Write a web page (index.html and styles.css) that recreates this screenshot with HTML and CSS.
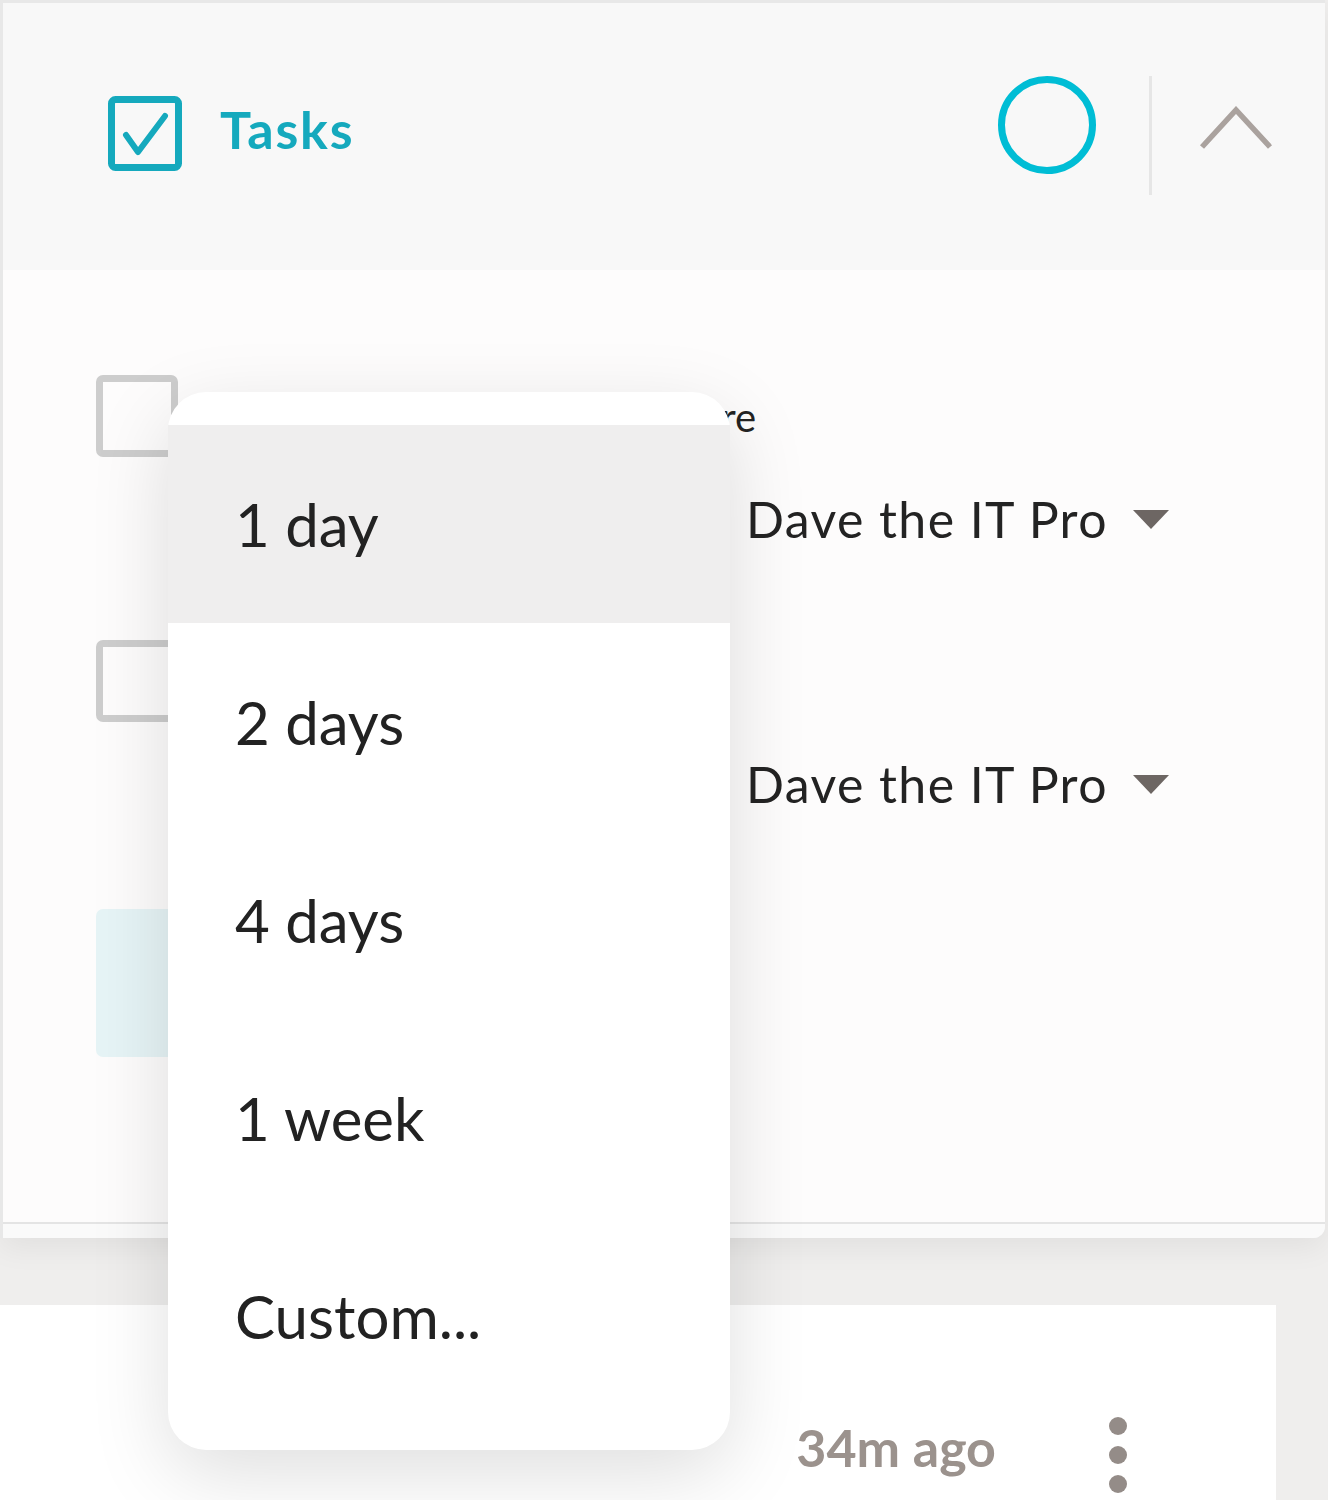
FILE: index.html
```html
<!DOCTYPE html>
<html lang="en">
<head>
    <meta charset="UTF-8">
    <meta name="viewport" content="width=device-width, initial-scale=1.0">
    <title>Tasks</title>
    <link rel="stylesheet" href="styles.css">
</head>
<body>
    <div class="page">
        <section class="panel">
            <header class="panel-header">
                <svg class="tasks-icon" width="74" height="75" viewBox="0 0 74 75">
                    <rect x="3.5" y="3.5" width="67" height="68" rx="4" fill="none" stroke="#15a9bd" stroke-width="7"/>
                    <polyline points="18,39 30,56 57,20" fill="none" stroke="#15a9bd" stroke-width="6" stroke-linecap="round" stroke-linejoin="round"/>
                </svg>
                <h1 class="panel-title">Tasks</h1>
                <div class="spacer"></div>
                <svg class="progress" width="100" height="100" viewBox="0 0 100 100">
                    <circle cx="50" cy="50" r="45.5" fill="none" stroke="#00bdd5" stroke-width="7"/>
                </svg>
                <div class="divider"></div>
                <svg class="collapse" width="74" height="45" viewBox="0 0 74 45">
                    <polyline points="3,41 37,4 71,41" fill="none" stroke="#aaa29e" stroke-width="5.5"/>
                </svg>
            </header>

            <div class="panel-body">
                <div class="task">
                    <div class="check"></div>
                    <div class="task-main">
                        <div class="task-title">Renew the antivirus software</div>
                        <div class="task-meta">
                            <span class="due"></span>
                            <span class="assignee">Dave the IT Pro <i class="caret"></i></span>
                        </div>
                    </div>
                </div>
                <div class="task">
                    <div class="check"></div>
                    <div class="task-main">
                        <div class="task-title"></div>
                        <div class="task-meta">
                            <span class="due"></span>
                            <span class="assignee">Dave the IT Pro <i class="caret"></i></span>
                        </div>
                    </div>
                </div>
                <div class="add-task"></div>
            </div>
            <div class="panel-foot"></div>
        </section>

        <section class="feed-card">
            <span class="time">34m ago</span>
            <span class="kebab"><i></i><i></i><i></i></span>
        </section>

        <ul class="menu">
            <li class="menu-item active">1 day</li>
            <li class="menu-item">2 days</li>
            <li class="menu-item">4 days</li>
            <li class="menu-item">1 week</li>
            <li class="menu-item">Custom...</li>
        </ul>
    </div>
</body>
</html>
```

FILE: styles.css
```css
html, body {
    margin: 0;
    padding: 0;
    background-color: #efeeed;
}
body {
    font-family: Lato, "Open Sans", sans-serif;
    color: #232323;
    height: 1500px;
    overflow: hidden;
}
.page {
    position: relative;
    width: 1328px;
}

/* tasks panel */
.panel {
    width: 1322px;
    border-top: 3px solid #e8e8e8;
    border-left: 3px solid #e8e8e8;
    border-bottom-right-radius: 12px;
    background-color: #fafafa;
    box-shadow: 0 10px 30px rgba(0,0,0,0.06);
    overflow: hidden;
}
.panel-header {
    display: flex;
    align-items: flex-start;
    height: 267px;
    padding: 0 52px 0 105px;
    background-color: #f8f8f8;
}
.tasks-icon {
    margin-top: 93px;
}
.panel-title {
    margin: 100px 0 0 38px;
    font-size: 52px;
    line-height: 1;
    font-weight: 700;
    letter-spacing: 1.8px;
    color: #15a9bd;
}
.spacer {
    flex: 1;
}
.progress {
    margin-top: 72px;
}
.divider {
    width: 3px;
    height: 119px;
    margin: 73px 0 0 52px;
    background-color: #e6e6e6;
}
.collapse {
    margin: 103px 0 0 47px;
}

.panel-body {
    box-sizing: border-box;
    height: 954px;
    padding: 105px 0 0 93px;
    background-color: #fdfcfc;
    border-bottom: 2px solid #e4e4e4;
}
.task {
    display: flex;
    align-items: flex-start;
    height: 265px;
}
.task + .task {
    height: 269px;
}
.check {
    box-sizing: border-box;
    width: 82px;
    height: 82px;
    border: 7px solid #cdcdcd;
    border-radius: 7px;
}
.task-main {
    margin-left: 67px;
}
.task-title {
    height: 40px;
    margin-top: 22px;
    font-size: 40px;
    line-height: 1;
    white-space: nowrap;
}
.task-meta {
    display: flex;
    align-items: center;
    margin-top: 57px;
    font-size: 50px;
    line-height: 1;
}
.due {
    width: 461px;
    height: 50px;
    margin-right: 40px;
}
.assignee {
    display: flex;
    align-items: center;
    white-space: nowrap;
    letter-spacing: 1.4px;
}
.caret {
    width: 0;
    height: 0;
    margin-left: 25px;
    border-left: 18px solid transparent;
    border-right: 18px solid transparent;
    border-top: 19px solid #6d6663;
}
.add-task {
    width: 560px;
    height: 148px;
    border-radius: 7px;
    background-color: #e6f4f6;
}
.panel-foot {
    height: 14px;
    background-color: #fafafa;
}

/* activity card below */
.feed-card {
    display: flex;
    align-items: flex-start;
    justify-content: flex-end;
    box-sizing: border-box;
    width: 1276px;
    height: 200px;
    margin-top: 67px;
    padding: 112px 149px 0 0;
    background-color: #fff;
}
.time {
    font-size: 52px;
    line-height: 1;
    font-weight: 700;
    color: #9b928d;
    margin-top: 4px;
}
.kebab {
    display: flex;
    flex-direction: column;
    gap: 11px;
    margin-left: 113px;
    margin-top: 0;
}
.kebab i {
    display: block;
    width: 18px;
    height: 18px;
    border-radius: 50%;
    background-color: #948c88;
}

/* due date menu */
.menu {
    position: absolute;
    left: 168px;
    top: 392px;
    width: 562px;
    margin: 0;
    padding: 33px 0 35px;
    list-style: none;
    background-color: #fff;
    border-radius: 38px;
    box-shadow: 0 24px 80px rgba(0,0,0,0.13);
}
.menu-item {
    display: flex;
    align-items: center;
    height: 198px;
    padding-left: 67px;
    font-size: 60px;
    line-height: 1;
    color: #222;
}
.menu-item.active {
    background-color: #efeeee;
}
```
